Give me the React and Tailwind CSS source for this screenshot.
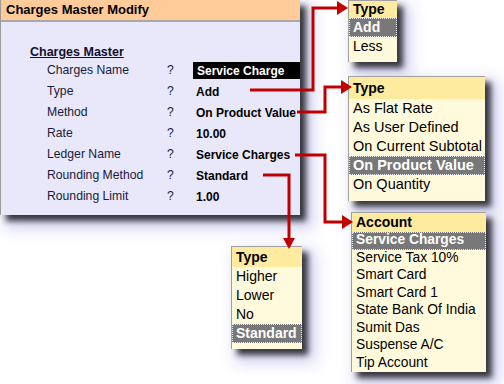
import React from 'react';

const rows = [
  { label: 'Charges Name', value: 'Service Charge', active: true },
  { label: 'Type', value: 'Add' },
  { label: 'Method', value: 'On Product Value' },
  { label: 'Rate', value: '10.00' },
  { label: 'Ledger Name', value: 'Service Charges' },
  { label: 'Rounding Method', value: 'Standard' },
  { label: 'Rounding Limit', value: '1.00' },
];

const shadow =
  'shadow-[6px_6px_6px_rgba(0,0,0,0.75),9px_9px_14px_5px_rgba(200,200,240,0.75)]';

function Popup({ box, title, headerH, rowH, text, items, selected }) {
  return (
    <div className={`absolute bg-[#fffadc] border-l border-t border-[#a0a0a0] ${shadow} ${box}`}>
      <div className={`flex items-center pl-[4px] bg-[#ffeba0] font-bold text-[14px] text-black ${headerH}`}>
        {title}
      </div>
      {items.map((item) =>
        item === selected ? (
          <div
            key={item}
            className={`flex items-center pl-[3px] bg-[#787878] border border-dotted border-[#e8e8e8] font-bold text-white ${rowH} ${text}`}
          >
            {item}
          </div>
        ) : (
          <div key={item} className={`flex items-center pl-[4px] text-black ${rowH} ${text}`}>
            {item}
          </div>
        )
      )}
    </div>
  );
}

export default function App() {
  return (
    <div className="relative w-[504px] h-[384px] bg-white overflow-hidden font-['Liberation_Sans',Arial,sans-serif]">
      {/* Main form */}
      <div className={`absolute left-0 top-0 w-[300px] h-[215px] bg-[#e8e8fa] border-l border-[#9a9a9a] ${shadow}`}>
        <div className="h-[22px] bg-[#ffcc99] border-b-2 border-[#a8a8a8] pl-[5px] flex items-center font-bold text-[13px] text-black">
          Charges Master Modify
        </div>
        <div className="pt-[22px]">
          <div className="h-[16px] leading-[16px] pl-[29px] font-bold text-[12.5px] underline text-[#10102a]">
            Charges Master
          </div>
          {rows.map((r) => (
            <div key={r.label} className="flex items-center h-[21px]">
              <div className="w-[166px] pl-[46px] text-[12.2px] text-[#1a1a3a]">{r.label}</div>
              <div className="w-[26px] text-[12.2px] text-[#1a1a3a]">?</div>
              {r.active ? (
                <div className="flex-1 h-[17px] bg-black text-white font-bold text-[12px] flex items-center pl-[4px]">
                  {r.value}
                </div>
              ) : (
                <div className="flex-1 pl-[3px] font-bold text-[12px] text-black">{r.value}</div>
              )}
            </div>
          ))}
        </div>
      </div>

      <Popup
        box="left-[348px] top-0 w-[49px] pb-[6px]"
        title="Type"
        headerH="h-[17px]"
        rowH="h-[19px]"
        text="text-[14px]"
        items={['Add', 'Less']}
        selected="Add"
      />

      <Popup
        box="left-[348px] top-[76px] w-[137px] pb-[7px]"
        title="Type"
        headerH="h-[22px]"
        rowH="h-[19px]"
        text="text-[14.5px]"
        items={['As Flat Rate', 'As User Defined', 'On Current Subtotal', 'On Product Value', 'On Quantity']}
        selected="On Product Value"
      />

      <Popup
        box="left-[351px] top-[212px] w-[135px]"
        title="Account"
        headerH="h-[19px]"
        rowH="h-[17.5px]"
        text="text-[13.8px]"
        items={[
          'Service Charges',
          'Service Tax 10%',
          'Smart Card',
          'Smart Card 1',
          'State Bank Of India',
          'Sumit Das',
          'Suspense A/C',
          'Tip Account',
        ]}
        selected="Service Charges"
      />

      <Popup
        box="left-[231px] top-[246px] w-[71px] pb-[6px]"
        title="Type"
        headerH="h-[20px]"
        rowH="h-[19px]"
        text="text-[14px]"
        items={['Higher', 'Lower', 'No', 'Standard']}
        selected="Standard"
      />

      {/* Connectors */}
      <svg className="absolute left-0 top-0 pointer-events-none" width="504" height="384" viewBox="0 0 504 384">
        <g fill="none" stroke="#c00000" strokeWidth="3">
          <polyline points="250,90 313,90 313,8 338,8" />
          <polyline points="297,112 325,112 325,87 342,87" />
          <polyline points="295,155 325,155 325,222 343,222" />
          <polyline points="263,175 289,175 289,239" />
        </g>
        <g fill="#c00000">
          <polygon points="337,1 348,8 337,15" />
          <polygon points="341,80 352,87 341,94" />
          <polygon points="342,215 353,222 342,229" />
          <polygon points="283,238 295,238 289,249" />
        </g>
      </svg>
    </div>
  );
}
